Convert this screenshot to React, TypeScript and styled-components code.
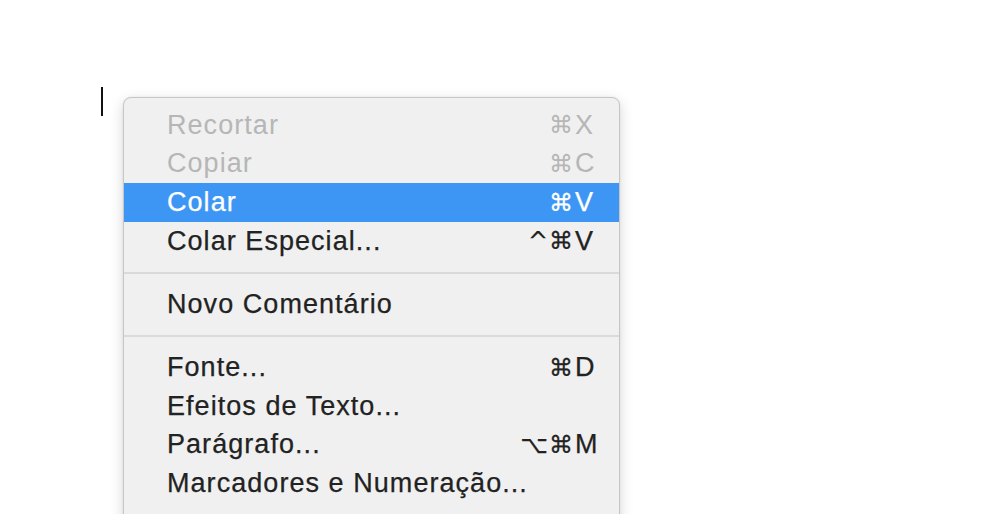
import React from "react";
import styled, { createGlobalStyle } from "styled-components";

const Global = createGlobalStyle`
  html, body { margin: 0; padding: 0; background: #ffffff; }
  body { width: 984px; height: 514px; overflow: hidden; font-family: "Liberation Sans", Arial, sans-serif; }
`;

const Page = styled.div`
  position: relative;
  width: 984px;
  height: 514px;
  background: #ffffff;
  overflow: hidden;
`;

const Document = styled.div`
  padding: 87px 0 0 101px;
`;

const Caret = styled.div`
  width: 2px;
  height: 29px;
  background: #111111;
`;

const Menu = styled.div`
  position: absolute;
  left: 123px;
  top: 97px;
  width: 495px;
  padding: 8px 0 40px;
  background: #f0f0f0;
  border: 1px solid #c6c6c6;
  border-radius: 8px;
  box-shadow: 0 4px 14px rgba(0, 0, 0, 0.16), 0 0 2px rgba(0, 0, 0, 0.08);
  display: flex;
  flex-direction: column;
`;

const Item = styled.div<{ $disabled?: boolean; $active?: boolean }>`
  height: 38.67px;
  display: flex;
  align-items: center;
  justify-content: space-between;
  padding: 0 24px 0 43px;
  font-size: 27px;
  letter-spacing: 1.05px;
  color: ${(p) => (p.$disabled ? "#b6b6b6" : p.$active ? "#ffffff" : "#222222")};
  -webkit-text-stroke: ${(p) => (p.$disabled ? "0" : "0.25px")};
  background: ${(p) => (p.$active ? "#3e96f4" : "transparent")};
`;

const Label = styled.span`
  white-space: nowrap;
`;

const Shortcut = styled.span`
  display: flex;
  align-items: center;
  white-space: nowrap;
  letter-spacing: 0.85px;
`;

const Mods = styled.span`
  text-align: right;
  font-family: "DejaVu Sans", sans-serif;
  font-size: 24px;
  letter-spacing: 1px;
`;

const Key = styled.span`
  width: 20px;
  text-align: left;
  margin-left: 1px;
`;

const Separator = styled.div`
  height: 2px;
  margin: 11px 0 11.5px;
  background: #dadada;
`;

type Entry =
  | { kind: "sep" }
  | { kind: "item"; label: string; mods?: string; key?: string; disabled?: boolean; active?: boolean };

const entries: Entry[] = [
  { kind: "item", label: "Recortar", mods: "⌘", key: "X", disabled: true },
  { kind: "item", label: "Copiar", mods: "⌘", key: "C", disabled: true },
  { kind: "item", label: "Colar", mods: "⌘", key: "V", active: true },
  { kind: "item", label: "Colar Especial...", mods: "^⌘", key: "V" },
  { kind: "sep" },
  { kind: "item", label: "Novo Comentário" },
  { kind: "sep" },
  { kind: "item", label: "Fonte...", mods: "⌘", key: "D" },
  { kind: "item", label: "Efeitos de Texto..." },
  { kind: "item", label: "Parágrafo...", mods: "⌥⌘", key: "M" },
  { kind: "item", label: "Marcadores e Numeração..." },
  { kind: "sep" },
];

export default function App() {
  return (
    <Page>
      <Global />
      <Document>
        <Caret />
      </Document>
      <Menu>
        {entries.map((e, i) =>
          e.kind === "sep" ? (
            <Separator key={i} />
          ) : (
            <Item key={i} $disabled={e.disabled} $active={e.active}>
              <Label>{e.label}</Label>
              {e.key && (
                <Shortcut>
                  <Mods>{e.mods}</Mods>
                  <Key>{e.key}</Key>
                </Shortcut>
              )}
            </Item>
          )
        )}
      </Menu>
    </Page>
  );
}
